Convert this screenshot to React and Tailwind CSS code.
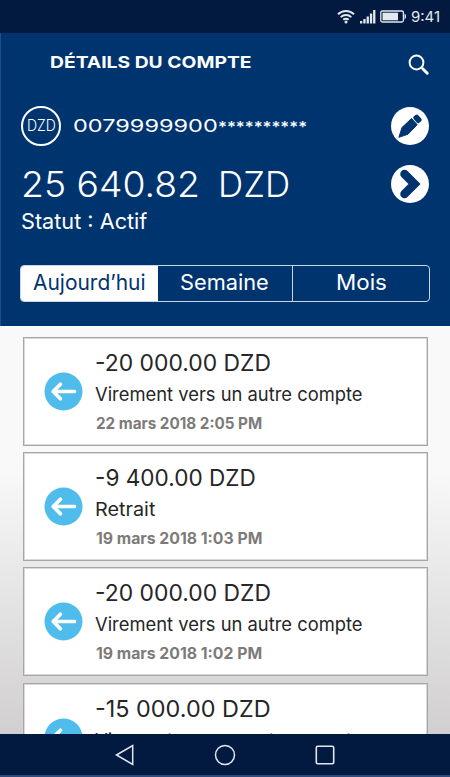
import React, { useLayoutEffect, useRef } from 'react';

const transactions = [
  { amount: '-20 000.00 DZD', amountWidth: 176, label: 'Virement vers un autre compte', labelWidth: 268, date: '22 mars 2018 2:05 PM', dateWidth: 166 },
  { amount: '-9 400.00 DZD', amountWidth: 161, label: 'Retrait', labelWidth: 60, date: '19 mars 2018 1:03 PM', dateWidth: 166 },
  { amount: '-20 000.00 DZD', amountWidth: 176, label: 'Virement vers un autre compte', labelWidth: 268, date: '19 mars 2018 1:02 PM', dateWidth: 166 },
  { amount: '-15 000.00 DZD', amountWidth: 176, label: 'Virement vers un autre compte', labelWidth: 268 },
];

const WideText = ({ width, className = '', children }) => {
  const ref = useRef(null);

  useLayoutEffect(() => {
    const el = ref.current;
    el.style.transform = `scaleX(${width / el.offsetWidth})`;
  }, [width, children]);

  return (
    <div className={`flex shrink-0 ${className}`} style={{ width }}>
      <span ref={ref} className="block shrink-0 origin-left whitespace-pre">{children}</span>
    </div>
  );
};

const StatusBar = () => (
  <div className="flex h-[33px] shrink-0 items-center justify-end bg-[#021a40] pr-[10px] text-[#e4e8ee]">
    <svg width="18" height="15" viewBox="0 0 18 15" fill="none" stroke="currentColor" strokeWidth="2">
      <path d="M1 5.200C5.500 .8 12.500.8 17 5.200" />
      <path d="M3.700 8.100c3-2.900 7.600-2.900 10.600 0" />
      <path d="M6.300 10.800c1.500-1.500 3.900-1.500 5.400 0" />
      <circle cx="9" cy="13" r="1.500" fill="currentColor" stroke="none" />
    </svg>
    <svg className="ml-[5px]" width="16" height="15" viewBox="0 0 16 15" fill="currentColor">
      <path d="M0 12h2.300v2.500H0zM3.300 10h2.300v4.500H3.300zM6.600 7.500h2.300v7H6.600zM9.900 4.500h2.300v10H9.900zM13.100 1h2.300v13.500h-2.300z" />
    </svg>
    <svg className="ml-[4px]" width="27" height="13" viewBox="0 0 27 13">
      <rect x=".8" y="1" width="22.600" height="11" rx="1.500" fill="none" stroke="currentColor" strokeWidth="1.300" />
      <rect x="2.500" y="2.700" width="15.500" height="7.600" fill="currentColor" />
      <path d="M24.500 3.500c2 .7 2 5.300 0 6z" fill="currentColor" />
    </svg>
    <WideText width={29} className="ml-[4px] text-[15px] leading-none">9:41</WideText>
  </div>
);

const Header = () => (
  <header className="h-[293px] shrink-0 border-l border-[#1f4f83] bg-[#00346f] text-white">
    <div className="flex items-start justify-between pt-[17px] pr-[20px] pl-[49px]">
      <WideText width={201} className="text-[16.500px] leading-[24px] font-bold">DÉTAILS DU COMPTE</WideText>
      <svg className="mt-[3px]" width="23" height="23" viewBox="0 0 23 23" fill="none" stroke="currentColor">
        <circle cx="9.500" cy="9.500" r="6.900" strokeWidth="2" />
        <path d="M14.700 14.700l1.600 1.600" strokeWidth="2" />
        <path d="M16.200 16.200l4 4" strokeWidth="3" strokeLinecap="round" />
      </svg>
    </div>

    <div className="mt-[30px] flex h-[40px] items-center pr-[21px] pl-[20px]">
      <div className="flex size-[40px] items-center justify-center rounded-full border-2 border-white">
        <WideText width={29} className="text-[15.500px] leading-none font-light">DZD</WideText>
      </div>
      <WideText width={145} className="ml-[12px] text-[17.500px] leading-[24px]">0079999900</WideText>
      <WideText width={89} className="pt-[2px] text-[15px] leading-[24px] font-medium">**********</WideText>
      <svg className="ml-auto" width="38" height="38" viewBox="0 0 38 38">
        <circle cx="19" cy="19" r="19" fill="#fff" />
        <g fill="#00346f">
          <path d="M7.900 30.300l3.100-9.800L20.500 11.500l5.700 6.200-9.200 9.500z" stroke="#00346f" strokeLinejoin="round" />
          <rect x="22.300" y="8.800" width="8.400" height="6" rx="2" transform="rotate(48 26.500 11.800)" />
        </g>
      </svg>
    </div>

    <div className="mt-[17px] flex h-[42px] items-center pr-[21px] pl-[20px]">
      <WideText width={179} className="text-[35px] leading-none font-light">25 640.82</WideText>
      <WideText width={72} className="ml-[18px] text-[35px] leading-none font-light">DZD</WideText>
      <svg className="ml-auto" width="38" height="38" viewBox="0 0 38 38">
        <circle cx="19" cy="19" r="19" fill="#fff" />
        <path d="M13.500 9L23.500 19 13.500 29" fill="none" stroke="#00346f" strokeWidth="8.500" strokeLinecap="round" />
      </svg>
    </div>
    <WideText width={126} className="mt-[3px] ml-[20px] text-[21.500px] leading-[26px]">Statut : Actif</WideText>

    <div className="mt-[31px] ml-[19px] flex h-[37px] w-[410px] items-center overflow-hidden rounded-[4px] border border-[#c9d5e2] text-[21.500px] leading-[26px]">
      <div className="flex h-full w-[137px] items-center justify-center bg-white pr-[1px] pb-[3px] text-[#00346f]">
        <WideText width={113}>Aujourd’hui</WideText>
      </div>
      <div className="flex h-full w-[135px] items-center justify-center border-r border-[#c9d5e2] pr-[1px] pb-[3px]">
        <WideText width={89}>Semaine</WideText>
      </div>
      <div className="flex h-full flex-1 items-center justify-center pb-[3px]">
        <WideText width={51}>Mois</WideText>
      </div>
    </div>
  </header>
);

const TransactionCard = ({ tx }) => (
  <div className="flex h-[109px] shrink-0 border border-[#a6a6a6] bg-white inset-shadow-[0_0_0_1px_#d9d9d9]">
    <svg className="mt-[34px] ml-[20px] shrink-0" width="39" height="39" viewBox="0 0 39 39">
      <circle cx="19.500" cy="19.500" r="19" fill="#4fbcec" />
      <path d="M30.500 19.500H9.200M16.400 12.300l-7.200 7.200 7.200 7.200" fill="none" stroke="#fff" strokeWidth="3.700" strokeLinecap="round" strokeLinejoin="round" />
    </svg>
    <div className="ml-[12px] pt-[11px]">
      <WideText width={tx.amountWidth} className="text-[23px] leading-[28px] text-[#262626]">{tx.amount}</WideText>
      <WideText width={tx.labelWidth} className="mt-[4px] text-[18.500px] leading-[26px] text-[#262626]">{tx.label}</WideText>
      {tx.date && (
        <WideText width={tx.dateWidth} className="mt-[6px] ml-[1px] text-[15.500px] leading-[22px] font-bold text-[#7c7b79]">{tx.date}</WideText>
      )}
    </div>
  </div>
);

const NavBar = () => (
  <nav className="flex h-[43px] shrink-0 items-center justify-between border-b-2 border-[#304b7d] bg-[#021a40] pr-[115px] pl-[115px] text-[#e2e7ee]">
    <svg width="20" height="22" viewBox="0 0 20 22" fill="none" stroke="currentColor" strokeWidth="1.500">
      <path d="M1.500 11L17.700 1.500v19z" />
    </svg>
    <svg width="22" height="22" viewBox="0 0 22 22" fill="none" stroke="currentColor" strokeWidth="1.500">
      <circle cx="11" cy="11" r="9.500" />
    </svg>
    <svg width="20" height="20" viewBox="0 0 20 20" fill="none" stroke="currentColor" strokeWidth="1.600">
      <rect x="1.300" y="1.300" width="17.400" height="17.400" rx="1.500" />
    </svg>
  </nav>
);

const App = () => {
  return (
    <div className="flex h-[777px] w-[450px] flex-col overflow-hidden bg-white font-['Inter',sans-serif]">
      <StatusBar />
      <Header />
      <main className="flex min-h-0 flex-1 flex-col gap-[6.200px] overflow-hidden bg-linear-to-b from-[#f9f9f9] from-35% to-[#d1cfcf] pt-[11px] pr-[22px] pl-[23px]">
        {transactions.map((tx, index) => (
          <TransactionCard key={index} tx={tx} />
        ))}
      </main>
      <NavBar />
    </div>
  );
};

export default App;
